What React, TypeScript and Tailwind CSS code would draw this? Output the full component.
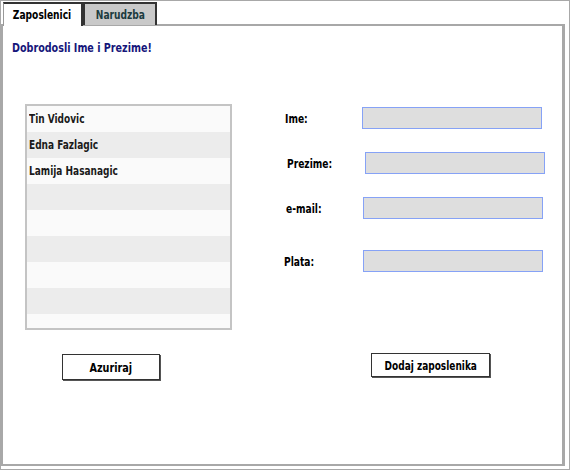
import React from 'react';

const font = { fontFamily: '"Liberation Sans Narrow", "DejaVu Sans Condensed", "Liberation Sans", sans-serif' };

const employees = ['Tin Vidovic', 'Edna Fazlagic', 'Lamija Hasanagic', '', '', '', '', '', ''];

function Field({ label, labelMl, labelW, mt }: { label: string; labelMl: number; labelW: number; mt: string }) {
  return (
    <div className={`flex items-center ${mt}`}>
      <span className="shrink-0 leading-[16px]" style={{ marginLeft: labelMl, width: labelW }}>
        <span className="inline-block origin-left scale-x-[0.78] whitespace-nowrap text-[13px] font-bold leading-[16px] text-black">
          {label}
        </span>
      </span>
      <div className="h-[22px] w-[180px] border border-[#86a2f6] bg-[#dedede]" />
    </div>
  );
}

export default function App() {
  return (
    <div className="h-[470px] w-[570px] border border-[#a8a8a8] bg-white pb-[3px] pr-[4px] leading-[16px]" style={font}>
      <div className="flex h-[23px] items-end pl-[2px]">
        <div className="relative z-10 -mb-[2px] flex h-[24px] w-[80px] items-center justify-center border-l border-r-2 border-t-2 border-l-[#999] border-r-[#333] border-t-[#333] bg-white">
          <span className="inline-block scale-x-[0.81] whitespace-nowrap text-[12.5px] font-bold leading-[16px] text-black">Zaposlenici</span>
        </div>
        <div className="-mb-[1px] flex h-[23px] w-[74px] items-center justify-center border-2 border-b-0 border-[#333] bg-[#c9c9c9]">
          <span className="inline-block scale-x-[0.81] whitespace-nowrap text-[12.5px] font-bold leading-[16px] text-[#1c3b3e]">Narudzba</span>
        </div>
      </div>
      <div className="h-[442px] border-2 border-r-[3px] border-[#a8a8a8] bg-white">
        <div className="ml-[9px] mt-[13px] h-[16px] leading-[16px]">
          <span className="inline-block origin-left scale-x-[0.82] whitespace-nowrap text-[13px] font-bold leading-[16px] text-[#16167a]">
            Dobrodosli Ime i Prezime!
          </span>
        </div>
        <div className="mt-[49px] flex items-start">
          <div className="ml-[22px] flex flex-col">
            <div className="h-[226px] w-[207px] overflow-hidden border-2 border-[#c4c4c4]">
              {employees.map((name, i) => (
                <div
                  key={i}
                  className={`flex h-[26px] items-center pl-[2px] ${i % 2 === 0 ? 'bg-[#fafafa]' : 'bg-[#ececec]'}`}
                >
                  <span className="inline-block origin-left scale-x-[0.8] whitespace-nowrap text-[12.5px] font-bold leading-[16px] text-[#1a1a1a]">
                    {name}
                  </span>
                </div>
              ))}
            </div>
            <button className="ml-[37px] mt-[24px] h-[26px] w-[98px] border border-[#333] bg-white leading-[16px] shadow-[1px_1px_0_#555]">
              <span className="inline-block scale-x-[0.86] whitespace-nowrap text-[12.5px] font-bold leading-[16px] text-black">Azuriraj</span>
            </button>
          </div>
          <div className="ml-[52px] flex flex-col">
            <Field label="Ime:" labelMl={1} labelW={77} mt="mt-[3px]" />
            <Field label="Prezime:" labelMl={3} labelW={78} mt="mt-[23px]" />
            <Field label="e-mail:" labelMl={2} labelW={77} mt="mt-[23px]" />
            <Field label="Plata:" labelMl={0} labelW={79} mt="mt-[31px]" />
            <button className="ml-[87px] mt-[81px] h-[24px] w-[119px] border border-[#333] bg-white leading-[16px] shadow-[1px_1px_0_#555]">
              <span className="inline-block scale-x-[0.8] whitespace-nowrap text-[12.5px] font-bold leading-[16px] text-black">Dodaj zaposlenika</span>
            </button>
          </div>
        </div>
      </div>
    </div>
  );
}
